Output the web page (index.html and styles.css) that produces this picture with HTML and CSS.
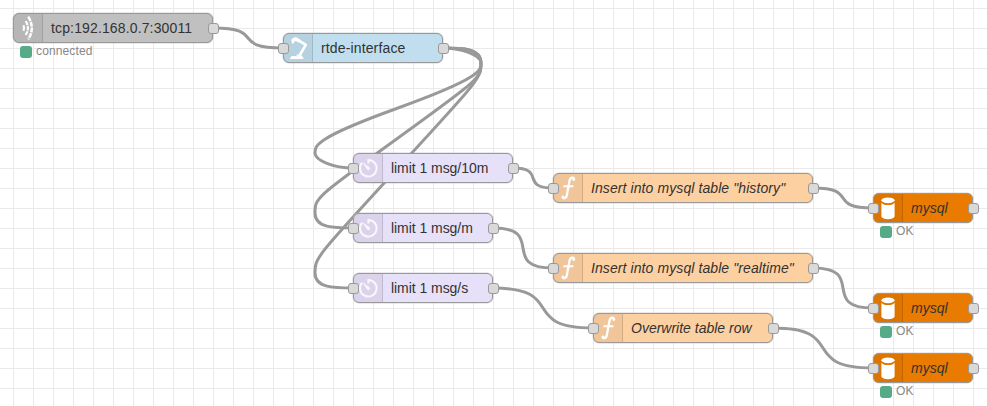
FILE: index.html
```html
<!DOCTYPE html>
<html lang="en">
<head>
<meta charset="utf-8">
<title>Flow</title>
<link rel="stylesheet" href="styles.css">
</head>
<body>
<svg class="defs" width="0" height="0">
  <symbol id="i-tcp" viewBox="0 0 30 30">
    <g fill="none" stroke="#fff">
      <path d="M10.4 12.3Q11.8 15 10.4 17.7" stroke-width="2.2"/>
      <path d="M12.6 8.2Q17.4 15 12.6 21.8" stroke-width="2.2" stroke-dasharray="4.4 .9"/>
      <path d="M15.2 3.6Q22.4 15 15.2 26.4" stroke-width="2.5" stroke-dasharray="4.9 .9"/>
    </g>
  </symbol>
  <symbol id="i-robot" viewBox="0 0 30 30">
    <g fill="none" stroke="#fff" stroke-linecap="round" stroke-linejoin="round">
      <path d="M9.9 9.2V7L13 5.8L22.8 11.8L16.8 22" stroke-width="2.6"/>
      <path d="M10.2 7.2L12.4 6L16 7.8" stroke-width="3.4"/>
      <path d="M14.2 22.2H17.6L19.8 25.4H7.7L9 23.8L14.6 24" fill="#fff" stroke-width="1.4"/>
    </g>
  </symbol>
  <symbol id="i-timer" viewBox="0 0 30 30">
    <g fill="none" stroke="#fff" stroke-width="2" opacity=".82">
      <path d="M9.2 9.6A8.3 8.3 0 1 0 15.4 6.9V10.4"/>
      <path d="M10.4 10.4L16.4 14.5Q17.4 16.4 15.4 16.9Q14.7 16.8 14.1 15.9Z" fill="#fff" stroke-width=".8"/>
    </g>
  </symbol>
  <symbol id="i-func" viewBox="0 0 30 30">
    <path d="M21.3 6.6C20.8 4 17.5 3.7 16.6 7.4L13.9 21.8C13.2 25.9 10.2 26.2 9.4 23.6" fill="none" stroke="#fff" stroke-width="2.3"/>
    <path d="M10.4 13.2H20.4" stroke="#fff" stroke-width="2"/>
    <circle cx="20.7" cy="6.5" r="1.4" fill="#fff"/><circle cx="10" cy="23.8" r="1.4" fill="#fff"/>
  </symbol>
  <symbol id="i-db" viewBox="0 0 30 30">
    <g fill="#fff"><ellipse cx="15" cy="7.3" rx="6.6" ry="2.9"/>
    <path d="M8.4 9.4Q9.9 12 15 12Q20.1 12 21.6 9.4V23.5Q20.2 26.2 15 26.2Q9.8 26.2 8.4 23.5Z"/></g>
  </symbol>
</svg>
<main class="canvas">
  <svg class="wires" width="987" height="406" viewBox="0 0 987 406">
    <path d="M213 28C267.6 28 228.4 48 283 48"/>
    <path d="M443 48C462 48 481 55.5 481 63S481 78 398 108S315 145.5 315 153S334 168 353 168"/>
    <path d="M443 48C462 48 481 48 481 63S481 78 398 138S315 198 315 213S334 228 353 228"/>
    <path d="M443 48C462 48 481 48 481 63S481 78 398 168S315 258 315 273S334 288 353 288"/>
    <path d="M513 168C546.5 168 519.5 188 553 188"/>
    <path d="M493 228C547 228 499 268 553 268"/>
    <path d="M493 288C568 288 518 328 593 328"/>
    <path d="M813 188C860 188 826 208 873 208"/>
    <path d="M813 268C867 268 819 308 873 308"/>
    <path d="M773 328C848 328 798 368 873 368"/>
  </svg>

  <div class="node tcp" style="left:13px;top:13px;width:200px"><svg class="icon"><use href="#i-tcp"/></svg><span class="label">tcp:192.168.0.7:30011</span><i class="port out"></i><div class="status"><i class="dot"></i>connected</div></div>
  <div class="node rtde" style="left:283px;top:33px;width:160px"><svg class="icon"><use href="#i-robot"/></svg><span class="label">rtde-interface</span><i class="port in"></i><i class="port out"></i></div>
  <div class="node delay" style="left:353px;top:153px;width:160px"><svg class="icon"><use href="#i-timer"/></svg><span class="label">limit 1 msg/10m</span><i class="port in"></i><i class="port out"></i></div>
  <div class="node delay" style="left:353px;top:213px;width:140px"><svg class="icon"><use href="#i-timer"/></svg><span class="label">limit 1 msg/m</span><i class="port in"></i><i class="port out"></i></div>
  <div class="node delay" style="left:353px;top:273px;width:140px"><svg class="icon"><use href="#i-timer"/></svg><span class="label">limit 1 msg/s</span><i class="port in"></i><i class="port out"></i></div>
  <div class="node func insert" style="left:553px;top:173px;width:260px"><svg class="icon"><use href="#i-func"/></svg><span class="label">Insert into mysql table "history"</span><i class="port in"></i><i class="port out"></i></div>
  <div class="node func insert" style="left:553px;top:253px;width:260px"><svg class="icon"><use href="#i-func"/></svg><span class="label">Insert into mysql table "realtime"</span><i class="port in"></i><i class="port out"></i></div>
  <div class="node func" style="left:593px;top:313px;width:180px"><svg class="icon"><use href="#i-func"/></svg><span class="label">Overwrite table row</span><i class="port in"></i><i class="port out"></i></div>
  <div class="node mysql" style="left:873px;top:193px;width:100px"><svg class="icon"><use href="#i-db"/></svg><span class="label">mysql</span><i class="port in"></i><i class="port out"></i><div class="status"><i class="dot"></i>OK</div></div>
  <div class="node mysql" style="left:873px;top:293px;width:100px"><svg class="icon"><use href="#i-db"/></svg><span class="label">mysql</span><i class="port in"></i><i class="port out"></i><div class="status"><i class="dot"></i>OK</div></div>
  <div class="node mysql" style="left:873px;top:353px;width:100px"><svg class="icon"><use href="#i-db"/></svg><span class="label">mysql</span><i class="port in"></i><i class="port out"></i><div class="status"><i class="dot"></i>OK</div></div>
</main>
</body>
</html>
```
FILE: styles.css
```css
* { box-sizing: border-box; }
body { margin: 0; overflow: hidden; background: #fff; font-family: "Liberation Sans", Arial, sans-serif; }
.defs { position: absolute; }
.canvas {
  position: relative; width: 987px; height: 406px; overflow: hidden;
  background-image: linear-gradient(90deg, #eaeaea 1px, transparent 1px), linear-gradient(#eaeaea 1px, transparent 1px);
  background-size: 20px 20px;
  background-position: 13px 8px;
}
.wires { display: block; }
.wires path { fill: none; stroke: #999; stroke-width: 3; }
.node { position: absolute; display: flex; align-items: center; height: 30px; border-radius: 6px; }
.node::after {
  content: ""; position: absolute; inset: 0; border: 1px solid #999; border-radius: 6px;
  box-shadow: 0 0 0 .5px rgba(153,153,153,.4);
}
.icon { flex: none; width: 30px; height: 30px; background: rgba(0,0,0,.05); border-radius: 6px 0 0 6px; }
.label { margin-left: 8px; font-size: 14px; line-height: 20px; color: #333; white-space: nowrap; box-shadow: -8px 0 0 -7px transparent; }
.node::before { content: ""; position: absolute; left: 29px; top: 1px; bottom: 1px; width: 1px; background: rgba(0,0,0,.12); }
.tcp { background: #c0c0c0; }
.rtde { background: #c0deed; }
.delay { background: #e6e0f8; }
.func { background: #fdd0a2; }
.mysql { background: #e97b00; }
.func .label, .mysql .label { font-style: italic; }
.tcp .label, .rtde .label { letter-spacing: .14px; }
.insert .label { letter-spacing: .09px; }
.delay .label { letter-spacing: -.05px; }
.port { position: absolute; z-index: 1; top: 10px; width: 11px; height: 11px; background: #d9d9d9; border: 1px solid #999; border-radius: 3px; }
.in { left: -5px; }
.out { right: -6px; }
.status { position: absolute; left: 7px; top: 32px; display: flex; align-items: center; gap: 4px; height: 13px; font-size: 12px; line-height: 13px; letter-spacing: .13px; color: #888; }
.dot { width: 12px; height: 12px; border-radius: 3px; background: #5a8; }
```
